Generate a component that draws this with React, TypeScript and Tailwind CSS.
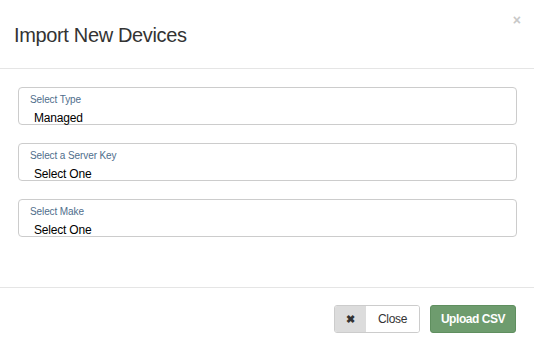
import React from "react";

const fields = [
  { label: "Select Type", value: "Managed" },
  { label: "Select a Server Key", value: "Select One" },
  { label: "Select Make", value: "Select One" },
];

const Field = ({ label, value }: { label: string; value: string }) => (
  <div className="h-[38px] rounded-[4px] border border-[#cccccc] pl-[11px] pt-[7px] leading-none">
    <div className="text-[10px] tracking-[-0.1px] text-[#4f6e8c]">{label}</div>
    <div className="mt-[7px] pl-[4px] text-[12px] tracking-[-0.2px] text-black">{value}</div>
  </div>
);

export default function App() {
  return (
    <div
      className="h-[352px] w-[534px] bg-white"
      style={{ fontFamily: '"Liberation Sans", Arial, sans-serif' }}
    >
      <div className="relative h-[69px] border-b border-[#e5e5e5] pl-[14px] pt-[22px]">
        <h1 className="text-[20px] leading-[26px] tracking-[-0.35px] text-[#333333]">
          Import New Devices
        </h1>
        <span className="absolute right-[13px] top-[10px] text-[14px] font-bold text-[#c8c8c8]">
          ×
        </span>
      </div>

      <div className="flex h-[218px] flex-col gap-[18px] pl-[18px] pr-[17px] pt-[18px]">
        {fields.map((f) => (
          <Field key={f.label} label={f.label} value={f.value} />
        ))}
      </div>

      <div className="flex justify-end gap-[10px] border-t border-[#e5e5e5] pr-[18px] pt-[17px]">
        <button className="flex h-[28px] items-stretch overflow-hidden rounded-[3px] border border-[#cccccc] text-[12px] tracking-[-0.3px] text-[#333333]">
          <span className="flex w-[31px] items-center justify-center bg-[#dcdcdc] text-[11px] font-bold text-[#333333]">
            ✖
          </span>
          <span className="flex w-[53px] items-center justify-center bg-white">
            Close
          </span>
        </button>
        <button className="h-[28px] w-[86px] rounded-[3px] border border-[#5f8f5f] bg-[#6e9c6e] text-[12px] font-bold tracking-[-0.45px] text-white">
          Upload CSV
        </button>
      </div>
    </div>
  );
}
